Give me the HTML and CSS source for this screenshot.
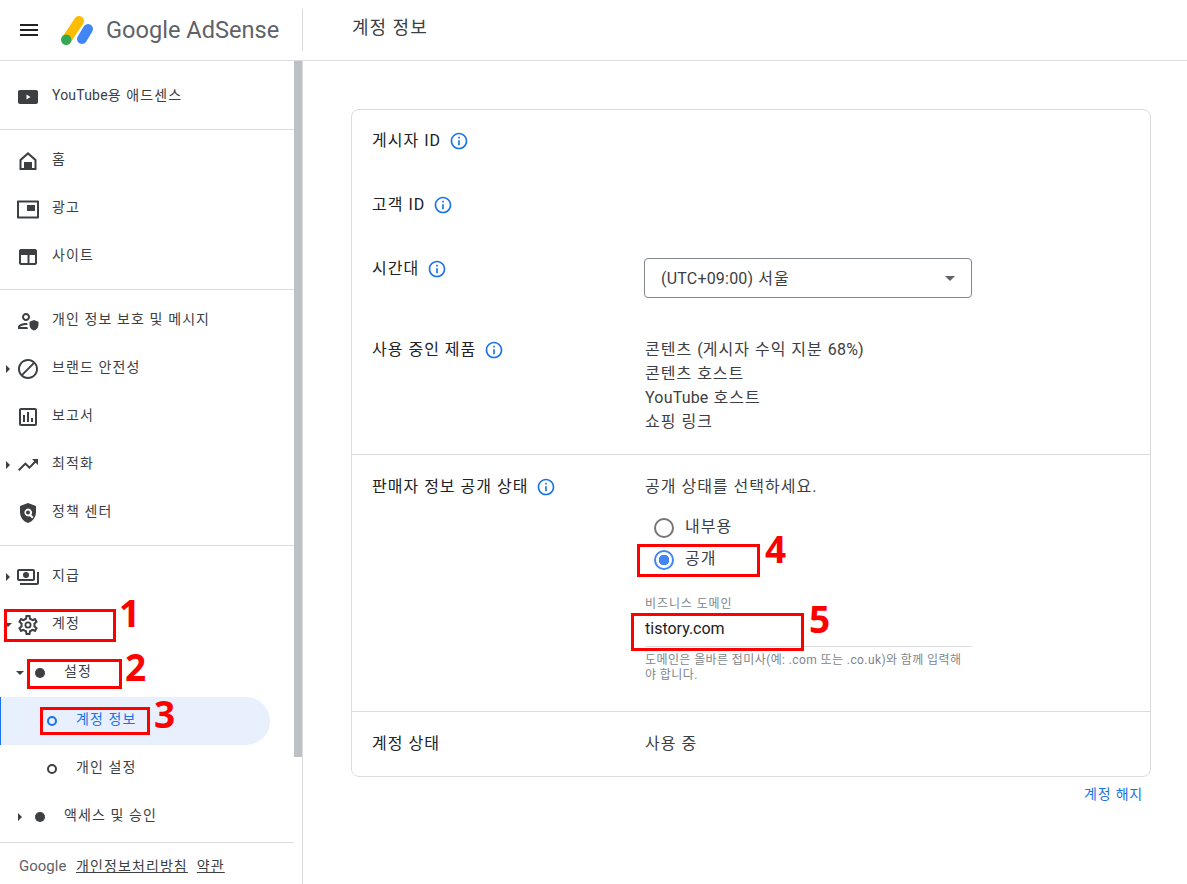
FILE: index.html
```html
<!DOCTYPE html>
<html lang="ko">
<head>
    <meta charset="UTF-8">
    <title>Google AdSense - 계정 정보</title>
    <link rel="stylesheet" href="styles.css">
</head>
<body>

    <header class="topbar">
        <div class="brand">
            <svg class="menu-icon" viewBox="0 0 24 24"><path d="M3 18h18v-2H3v2zm0-5h18v-2H3v2zm0-7v2h18V6H3z"/></svg>
            <svg class="logo" viewBox="0 0 36 32">
                <line x1="19" y1="7" x2="7" y2="25" stroke="#fbbc04" stroke-width="10" stroke-linecap="round"/>
                <circle cx="6.2" cy="25.8" r="5.2" fill="#34a853"/>
                <line x1="28" y1="15" x2="22" y2="25" stroke="#4285f4" stroke-width="10" stroke-linecap="round"/>
            </svg>
            <span class="logo-text">Google AdSense</span>
        </div>
        <div class="page-title">계정 정보</div>
    </header>

    <div class="layout">
        <aside class="sidebar">
            <nav class="nav">
                <div class="nav-group group-yt">
                    <a class="nav-item">
                        <span class="caret-slot"></span>
                        <svg class="nav-icon" viewBox="0 0 24 24"><path fill-rule="evenodd" d="M20 5H4C2.800 5 2 5.900 2 7v10c0 1.100.8 2 2 2h16c1.200 0 2-.9 2-2V7c0-1.100-.8-2-2-2zM10.500 14.500v-5l4 2.500-4 2.500z"/></svg>
                        <span class="nav-label"><span class="latin">YouTube</span>용 애드센스</span>
                    </a>
                </div>
                <div class="nav-group group-main">
                    <a class="nav-item">
                        <span class="caret-slot"></span>
                        <svg class="nav-icon" viewBox="0 0 24 24"><path d="M12 3L3.500 10.500V21h17V10.500L12 3zm6.500 16H16v-6H8v6H5.500v-7.600L12 5.700l6.500 5.700V19z"/></svg>
                        <span class="nav-label">홈</span>
                    </a>
                    <a class="nav-item">
                        <span class="caret-slot"></span>
                        <svg class="nav-icon" viewBox="0 0 24 24"><path fill-rule="evenodd" d="M2 3.500h20c.6 0 1 .4 1 1v16c0 .6-.4 1-1 1H2c-.6 0-1-.4-1-1v-16c0-.6.4-1 1-1zm1 2v14h18v-14H3zM11 8h8v6h-8z"/></svg>
                        <span class="nav-label">광고</span>
                    </a>
                    <a class="nav-item">
                        <span class="caret-slot"></span>
                        <svg class="nav-icon" viewBox="0 0 24 24"><path fill-rule="evenodd" d="M5 4h14c1.100 0 2 .9 2 2v12c0 1.100-.9 2-2 2H5c-1.100 0-2-.9-2-2V6c0-1.100.9-2 2-2zm0 6v8h6.500v-8H5zm8.500 0v8H19v-8h-5.500z"/></svg>
                        <span class="nav-label">사이트</span>
                    </a>
                </div>
                <div class="nav-group group-tools">
                    <a class="nav-item">
                        <span class="caret-slot"></span>
                        <svg class="nav-icon" viewBox="0 0 24 24"><path d="M10 12c2.200 0 4-1.800 4-4s-1.800-4-4-4-4 1.800-4 4 1.800 4 4 4zm0-6c1.100 0 2 .9 2 2s-.9 2-2 2-2-.9-2-2 .9-2 2-2zM4 18c.2-.7 3.300-2 6-2 .5 0 1 .1 1.500.1l-.3-2c-.4 0-.8-.1-1.200-.1-2.700 0-8 1.300-8 4v2h10l-.7-2H4zM18 11l-4.500 1.800v3c0 2.700 1.900 5.200 4.500 5.800 2.600-.6 4.500-3.100 4.500-5.800v-3L18 11z"/></svg>
                        <span class="nav-label">개인 정보 보호 및 메시지</span>
                    </a>
                    <a class="nav-item">
                        <span class="caret-slot"><span class="caret caret-right"></span></span>
                        <svg class="nav-icon" viewBox="0 0 24 24"><path d="M12 2C6.480 2 2 6.480 2 12s4.480 10 10 10 10-4.480 10-10S17.520 2 12 2zM4 12c0-4.420 3.580-8 8-8 1.850 0 3.550.63 4.900 1.690L5.690 16.900C4.630 15.550 4 13.850 4 12zm8 8c-1.850 0-3.550-.63-4.900-1.690L18.310 7.100C19.370 8.450 20 10.150 20 12c0 4.420-3.580 8-8 8z"/></svg>
                        <span class="nav-label">브랜드 안전성</span>
                    </a>
                    <a class="nav-item">
                        <span class="caret-slot"></span>
                        <svg class="nav-icon" viewBox="0 0 24 24"><path d="M19 3H5c-1.100 0-2 .9-2 2v14c0 1.100.9 2 2 2h14c1.100 0 2-.9 2-2V5c0-1.100-.9-2-2-2zm0 16H5V5h14v14zM7 10h2v7H7zm4-3h2v10h-2zm4 6h2v4h-2z"/></svg>
                        <span class="nav-label">보고서</span>
                    </a>
                    <a class="nav-item">
                        <span class="caret-slot"><span class="caret caret-right"></span></span>
                        <svg class="nav-icon" viewBox="0 0 24 24"><path d="M16 6l2.290 2.290-4.880 4.880-4-4L2 16.590 3.410 18l6-6 4 4 6.300-6.290L22 12V6z"/></svg>
                        <span class="nav-label">최적화</span>
                    </a>
                    <a class="nav-item">
                        <span class="caret-slot"></span>
                        <svg class="nav-icon" viewBox="0 0 24 24"><path fill-rule="evenodd" d="M12 2L4 5v6.100c0 5 3.400 9.700 8 10.900 4.600-1.200 8-5.900 8-10.900V5l-8-3zm0 5.500a4 4 0 0 1 3.300 6.300l2.200 2.200-1.400 1.400-2.200-2.200A4 4 0 1 1 12 7.500zm0 2a2 2 0 1 0 0 4 2 2 0 0 0 0-4z"/></svg>
                        <span class="nav-label">정책 센터</span>
                    </a>
                </div>
                <div class="nav-group group-account">
                    <a class="nav-item">
                        <span class="caret-slot"><span class="caret caret-right"></span></span>
                        <svg class="nav-icon" viewBox="0 0 24 24"><path fill-rule="evenodd" d="M19 14V6c0-1.100-.9-2-2-2H3c-1.100 0-2 .9-2 2v8c0 1.100.9 2 2 2h14c1.100 0 2-.9 2-2zm-2 0H3V6h14v8zm-7-7a3 3 0 1 0 0 6 3 3 0 0 0 0-6zm13 0v11c0 1.100-.9 2-2 2H4v-2h17V7h2z"/></svg>
                        <span class="nav-label">지급</span>
                    </a>
                    <a class="nav-item">
                        <span class="caret-slot"><span class="caret caret-down"></span></span>
                        <svg class="nav-icon" viewBox="0 0 24 24"><path d="M19.430 12.980c.04-.32.07-.64.07-.98 0-.34-.03-.66-.07-.98l2.110-1.650c.19-.15.24-.42.12-.64l-2-3.460c-.09-.16-.26-.25-.44-.25-.06 0-.12.01-.17.03l-2.490 1c-.52-.4-1.080-.73-1.690-.98l-.38-2.650C14.460 2.180 14.250 2 14 2h-4c-.25 0-.46.18-.49.42l-.38 2.650c-.61.25-1.170.59-1.690.98l-2.490-1c-.06-.02-.12-.03-.18-.03-.17 0-.34.09-.43.25l-2 3.460c-.13.22-.07.49.12.64l2.110 1.650c-.04.32-.07.65-.07.98 0 .33.03.66.07.98l-2.110 1.650c-.19.15-.24.42-.12.64l2 3.460c.09.16.26.25.44.25.06 0 .12-.01.17-.03l2.490-1c.52.4 1.080.73 1.690.98l.38 2.650c.03.24.24.42.49.42h4c.25 0 .46-.18.49-.42l.38-2.650c.61-.25 1.170-.59 1.690-.98l2.490 1c.06.02.12.03.18.03.17 0 .34-.09.43-.25l2-3.460c.12-.22.07-.49-.12-.64l-2.110-1.650zm-1.980-1.710c.04.31.05.52.05.73 0 .21-.02.43-.05.73l-.14 1.130.89.7 1.080.84-.7 1.210-1.270-.51-1.040-.42-.9.68c-.43.32-.84.56-1.250.73l-1.060.43-.16 1.130-.2 1.350h-1.400l-.19-1.350-.16-1.130-1.060-.43c-.43-.18-.83-.41-1.230-.71l-.91-.7-1.060.43-1.270.51-.7-1.210 1.080-.84.89-.7-.14-1.130c-.03-.31-.05-.54-.05-.74s.02-.43.05-.73l.14-1.130-.89-.7-1.080-.84.7-1.210 1.270.51 1.040.42.9-.68c.43-.32.84-.56 1.250-.73l1.060-.43.16-1.130.2-1.350h1.390l.19 1.350.16 1.130 1.060.43c.43.18.83.41 1.230.71l.91.7 1.060-.43 1.270-.51.7 1.210-1.070.85-.89.7.14 1.130zM12 8.500a3.500 3.500 0 1 0 0 7 3.500 3.500 0 0 0 0-7zm0 5.200a1.700 1.700 0 1 1 0-3.400 1.700 1.700 0 0 1 0 3.400z"/></svg>
                        <span class="nav-label">계정</span>
                    </a>
                    <a class="nav-item level-1">
                        <span class="caret-slot"><span class="caret caret-down"></span></span>
                        <span class="dot-slot"><span class="dot"></span></span>
                        <span class="nav-label">설정</span>
                    </a>
                    <a class="nav-item level-2 active">
                        <span class="caret-slot"></span>
                        <span class="dot-slot"><span class="ring"></span></span>
                        <span class="nav-label">계정 정보</span>
                    </a>
                    <a class="nav-item level-2">
                        <span class="caret-slot"></span>
                        <span class="dot-slot"><span class="ring"></span></span>
                        <span class="nav-label">개인 설정</span>
                    </a>
                    <a class="nav-item level-1">
                        <span class="caret-slot"><span class="caret caret-right"></span></span>
                        <span class="dot-slot"><span class="dot"></span></span>
                        <span class="nav-label">액세스 및 승인</span>
                    </a>
                </div>
                <div class="nav-footer">
                    <span class="footer-logo">Google</span>
                    <a class="footer-link">개인정보처리방침</a>
                    <a class="footer-link">약관</a>
                </div>
            </nav>
            <div class="scroll-thumb"></div>
        </aside>

        <main class="main">
            <section class="card">
                <div class="card-section section-top">
                    <div class="row">
                        <div class="row-label">게시자 ID <svg class="info" viewBox="0 0 24 24"><path d="M11 7h2v2h-2zm0 4h2v6h-2zm1-9C6.480 2 2 6.480 2 12s4.480 10 10 10 10-4.480 10-10S17.520 2 12 2zm0 18c-4.410 0-8-3.590-8-8s3.590-8 8-8 8 3.590 8 8-3.590 8-8 8z"/></svg></div>
                    </div>
                    <div class="row">
                        <div class="row-label">고객 ID <svg class="info" viewBox="0 0 24 24"><path d="M11 7h2v2h-2zm0 4h2v6h-2zm1-9C6.480 2 2 6.480 2 12s4.480 10 10 10 10-4.480 10-10S17.520 2 12 2zm0 18c-4.410 0-8-3.590-8-8s3.590-8 8-8 8 3.590 8 8-3.590 8-8 8z"/></svg></div>
                    </div>
                    <div class="row">
                        <div class="row-label">시간대 <svg class="info" viewBox="0 0 24 24"><path d="M11 7h2v2h-2zm0 4h2v6h-2zm1-9C6.480 2 2 6.480 2 12s4.480 10 10 10 10-4.480 10-10S17.520 2 12 2zm0 18c-4.410 0-8-3.590-8-8s3.590-8 8-8 8 3.590 8 8-3.590 8-8 8z"/></svg></div>
                        <div class="row-value">
                            <div class="select">
                                <span><span class="latin">(UTC+09:00)</span> 서울</span>
                                <span class="select-arrow"></span>
                            </div>
                        </div>
                    </div>
                    <div class="row">
                        <div class="row-label">사용 중인 제품 <svg class="info" viewBox="0 0 24 24"><path d="M11 7h2v2h-2zm0 4h2v6h-2zm1-9C6.480 2 2 6.480 2 12s4.480 10 10 10 10-4.480 10-10S17.520 2 12 2zm0 18c-4.410 0-8-3.590-8-8s3.590-8 8-8 8 3.590 8 8-3.590 8-8 8z"/></svg></div>
                        <div class="row-value">
                            <div>콘텐츠 <span class="latin">(</span>게시자 수익 지분 <span class="latin">68%)</span></div>
                            <div>콘텐츠 호스트</div>
                            <div><span class="latin">YouTube</span> 호스트</div>
                            <div>쇼핑 링크</div>
                        </div>
                    </div>
                </div>
                <div class="card-section section-seller">
                    <div class="row">
                        <div class="row-label">판매자 정보 공개 상태 <svg class="info" viewBox="0 0 24 24"><path d="M11 7h2v2h-2zm0 4h2v6h-2zm1-9C6.480 2 2 6.480 2 12s4.480 10 10 10 10-4.480 10-10S17.520 2 12 2zm0 18c-4.410 0-8-3.590-8-8s3.590-8 8-8 8 3.590 8 8-3.590 8-8 8z"/></svg></div>
                        <div class="row-value">
                            <div>공개 상태를 선택하세요.</div>
                            <div class="radios">
                                <label class="radio"><span class="radio-mark"></span><span class="radio-text">내부용</span></label>
                                <label class="radio checked"><span class="radio-mark"></span><span class="radio-text">공개</span></label>
                            </div>
                            <div class="field">
                                <div class="field-label">비즈니스 도메인</div>
                                <div class="field-value">tistory.com</div>
                                <div class="field-help">도메인은 올바른 접미사(예: .com 또는 .co.uk)와 함께 입력해야 합니다.</div>
                            </div>
                        </div>
                    </div>
                </div>
                <div class="card-section section-status">
                    <div class="row">
                        <div class="row-label">계정 상태</div>
                        <div class="row-value">사용 중</div>
                    </div>
                </div>
            </section>
            <div class="card-actions"><a class="close-link">계정 해지</a></div>
        </main>
    </div>

    <!-- annotations drawn over the screenshot -->
    <div class="mark mark-1"></div><span class="mark-num num-1">1</span>
    <div class="mark mark-2"></div><span class="mark-num num-2">2</span>
    <div class="mark mark-3"></div><span class="mark-num num-3">3</span>
    <div class="mark mark-4"></div><span class="mark-num num-4">4</span>
    <div class="mark mark-5"></div><span class="mark-num num-5">5</span>

</body>
</html>
```

FILE: styles.css
```css
* {
    box-sizing: border-box;
}
html, body {
    height: 100%;
}
body {
    margin: 0;
    position: relative;
    overflow: hidden;
    background-color: #fff;
    color: #202124;
    font-family: Roboto, "Noto Sans CJK KR", sans-serif;
    font-size: 16px;
    line-height: 24px;
}
.latin {
    letter-spacing: 0.2px;
}

/* top bar */
.topbar {
    display: flex;
    height: 61px;
    border-bottom: 1px solid #dadce0;
}
.brand {
    display: flex;
    align-items: center;
    width: 303px;
    height: 42px;
    margin-top: 9px;
    padding-left: 17px;
    border-right: 1px solid #dadce0;
}
.menu-icon {
    width: 24px;
    height: 24px;
    fill: #202124;
}
.logo {
    width: 36px;
    height: 32px;
    margin-left: 19px;
}
.logo-text {
    margin-left: 10px;
    font-size: 23.6px;
    color: #5f6368;
    white-space: nowrap;
}
.page-title {
    padding: 16px 0 0 49px;
    font-size: 18px;
    letter-spacing: 1px;
    color: #3c4043;
}

.layout {
    display: flex;
    height: 823px;
}

/* sidebar */
.sidebar {
    display: flex;
    flex: none;
    width: 303px;
    border-right: 1px solid #dadce0;
    overflow: hidden;
}
.nav {
    flex: none;
    width: 294px;
}
.scroll-thumb {
    flex: none;
    width: 8px;
    height: 696px;
    background-color: #bdc1c6;
}
.nav-group {
    border-bottom: 1px solid #dadce0;
}
.group-yt {
    height: 69px;
    padding-top: 12px;
}
.group-main {
    height: 160px;
    padding-top: 7px;
}
.group-tools {
    height: 256px;
    padding-top: 7px;
}
.group-account {
    height: 297px;
    padding-top: 7px;
}
.nav-item {
    display: flex;
    align-items: center;
    height: 48px;
    color: #3c4043;
    font-size: 14px;
    letter-spacing: 1.1px;
}
.nav-item.level-1 {
    padding-left: 12px;
}
.nav-item.level-2 {
    padding-left: 24px;
}
.nav-item.active {
    width: 270px;
    border-left: 1px solid #1a73e8;
    padding-left: 23px;
    border-radius: 0 24px 24px 0;
    background-color: #e8f0fe;
    color: #1a73e8;
}
.caret-slot {
    display: flex;
    flex: none;
    justify-content: center;
    width: 16px;
}
.caret {
    width: 0;
    height: 0;
    border-style: solid;
    border-color: transparent;
}
.caret-right {
    border-width: 4px 0 4px 4px;
    border-left-color: #3c4043;
}
.caret-down {
    border-width: 4px 4px 0 4px;
    border-top-color: #3c4043;
}
.nav-icon {
    flex: none;
    width: 24px;
    height: 24px;
    fill: #3c4043;
}
.dot-slot {
    display: flex;
    flex: none;
    align-items: center;
    justify-content: center;
    width: 24px;
}
.dot {
    width: 10px;
    height: 10px;
    border-radius: 50%;
    background-color: #3c4043;
}
.ring {
    width: 10px;
    height: 10px;
    border: 2px solid #3c4043;
    border-radius: 50%;
}
.active .ring {
    border-color: #1a73e8;
}
.nav-label {
    margin-left: 12px;
    padding-bottom: 5px;
    white-space: nowrap;
}
.nav-footer {
    display: flex;
    align-items: center;
    height: 48px;
    padding-left: 19px;
    color: #3c4043;
    font-size: 14px;
    letter-spacing: 1.1px;
}
.footer-logo {
    width: 57px;
    padding-bottom: 2px;
    color: #5f6368;
    font-size: 15px;
    letter-spacing: 0;
}
.footer-link {
    margin-right: 9px;
    padding-bottom: 2px;
    text-decoration: underline;
}

/* main content */
.main {
    flex: none;
    width: 800px;
    margin-left: 48px;
    padding-top: 48px;
}
.card {
    border: 1px solid #dadce0;
    border-radius: 8px;
}
.card-section {
    padding: 19px 20px 21px;
    border-bottom: 1px solid #dadce0;
}
.card-section:last-child {
    border-bottom: 0;
}
.section-top {
    padding-bottom: 20px;
}
.section-seller {
    padding-top: 20px;
    padding-bottom: 28px;
}
.section-status {
    padding-top: 20px;
    padding-bottom: 20px;
}
.row {
    display: flex;
    margin-bottom: 40px;
}
.row:last-child {
    margin-bottom: 0;
}
.row-label {
    display: flex;
    align-items: center;
    flex: none;
    height: 24px;
    width: 273px;
    letter-spacing: 1px;
}
.row-value {
    flex: none;
    width: 328px;
    letter-spacing: 1px;
    color: #3c4043;
}
.info {
    width: 20px;
    height: 20px;
    margin-left: 8px;
    fill: #1a73e8;
}
.select {
    display: flex;
    align-items: center;
    justify-content: space-between;
    height: 40px;
    margin: 1px 1px 0 -1px;
    padding: 2px 16px 0 16px;
    border: 1px solid #80868b;
    border-radius: 4px;
}
.select-arrow {
    width: 0;
    height: 0;
    margin-top: -2px;
    border-style: solid;
    border-width: 5px 5px 0 5px;
    border-color: #5f6368 transparent transparent;
}
.radios {
    margin-top: 13px;
}
.radio {
    display: flex;
    align-items: center;
    height: 32px;
    padding-left: 9px;
}
.radio-mark {
    width: 20px;
    height: 20px;
    margin-right: 11px;
    border: 2px solid #757575;
    border-radius: 50%;
}
.radio-text {
    padding-bottom: 2px;
}
.checked .radio-mark {
    border-color: #4285f4;
    background: radial-gradient(circle, #4285f4 5px, transparent 5.5px);
}
.field {
    margin-top: 20px;
    width: 327px;
}
.field-label {
    height: 16px;
    font-size: 12px;
    line-height: 16px;
    letter-spacing: 0.9px;
    color: #80868b;
}
.field-value {
    height: 35px;
    padding-top: 5px;
    border-bottom: 1px solid #dadce0;
    letter-spacing: 0;
    color: #202124;
}
.field-help {
    margin-top: 6px;
    font-size: 12px;
    line-height: 15px;
    letter-spacing: 0.4px;
    color: #80868b;
}
.card-actions {
    padding: 5px 8px 0 0;
    text-align: right;
}
.close-link {
    font-size: 14px;
    letter-spacing: 0.8px;
    color: #1a73e8;
}

/* red annotation boxes */
.mark {
    position: absolute;
    border: 3px solid #f00;
}
.mark-1 { left: 4px; top: 609px; width: 112px; height: 33px; }
.mark-2 { left: 27px; top: 659px; width: 95px; height: 30px; }
.mark-3 { left: 40px; top: 707px; width: 110px; height: 28px; }
.mark-4 { left: 637px; top: 544px; width: 123px; height: 33px; }
.mark-5 { left: 631px; top: 613px; width: 173px; height: 38px; }
.mark-num {
    position: absolute;
    color: #f00;
    font-family: "Noto Sans", sans-serif;
    font-size: 37px;
    font-weight: 700;
    line-height: 37px;
}
.num-1 { left: 119px; top: 594px; }
.num-2 { left: 125px; top: 648px; }
.num-3 { left: 154px; top: 695px; }
.num-4 { left: 765px; top: 530px; }
.num-5 { left: 809px; top: 600px; }
```
